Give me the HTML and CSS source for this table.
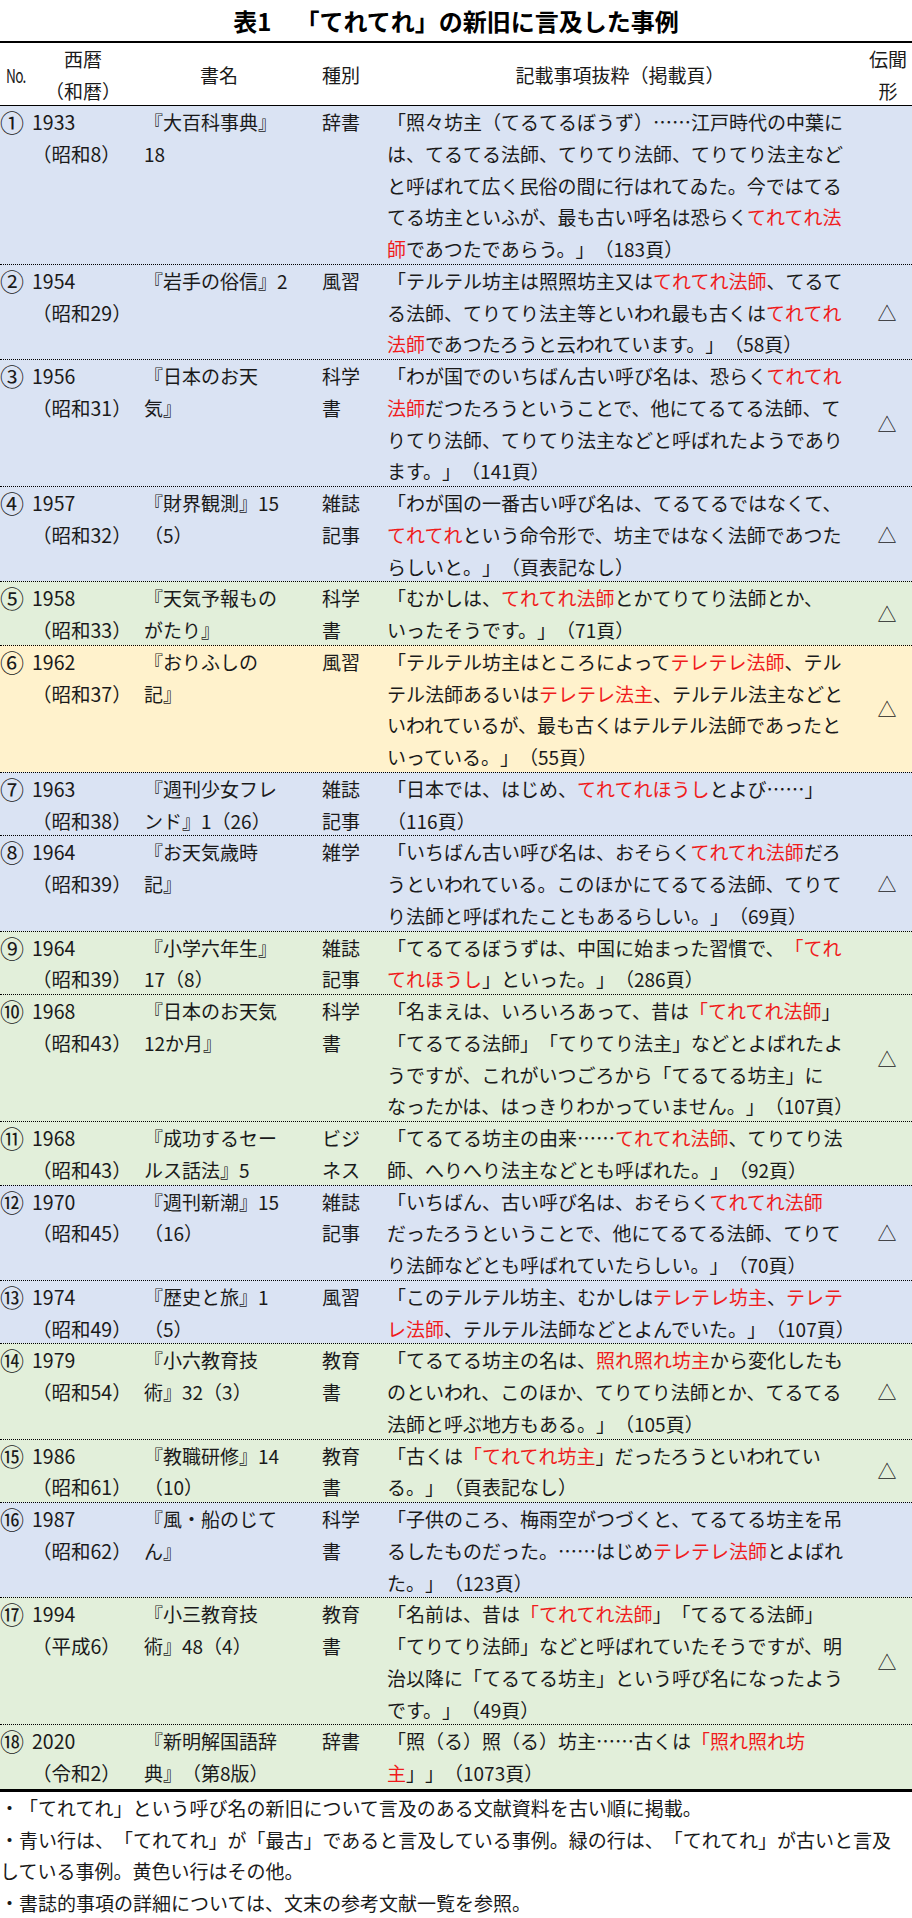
FILE: index.html
```
<!DOCTYPE html>
<html lang="ja">
<head>
<meta charset="utf-8">
<title>表1 「てれてれ」の新旧に言及した事例</title>
<link rel="stylesheet" href="styles.css">
</head>
<body>
<h1 class="title">表1　「てれてれ」の新旧に言及した事例</h1>
<div class="table">
  <div class="row head">
    <div class="c no"><span class="numero">No.</span></div>
    <div class="c yr">西暦<br>（和暦）</div>
    <div class="c bk">書名</div>
    <div class="c kd">種別</div>
    <div class="c tx">記載事項抜粋（掲載頁）</div>
    <div class="c mk">伝聞<br>形</div>
  </div>

  <div class="row blue">
    <div class="c no">①</div>
    <div class="c yr">1933<br>（昭和8）</div>
    <div class="c bk">『大百科事典』<br>18</div>
    <div class="c kd">辞書</div>
    <div class="c tx">「照々坊主（てるてるぼうず）……江戸時代の中葉に<br>は、てるてる法師、てりてり法師、てりてり法主など<br>と呼ばれて広く民俗の間に行はれてゐた。今ではてる<br>てる坊主といふが、最も古い呼名は恐らく<span class="r">てれてれ法</span><br><span class="r">師</span>であつたであらう。」（183頁）</div>
    <div class="c mk"></div>
  </div>

  <div class="row blue">
    <div class="c no">②</div>
    <div class="c yr">1954<br>（昭和29）</div>
    <div class="c bk">『岩手の俗信』2</div>
    <div class="c kd">風習</div>
    <div class="c tx">「テルテル坊主は照照坊主又は<span class="r">てれてれ法師</span>、てるて<br>る法師、てりてり法主等といわれ最も古くは<span class="r">てれてれ</span><br><span class="r">法師</span>であつたろうと云われています。」（58頁）</div>
    <div class="c mk">△</div>
  </div>

  <div class="row blue">
    <div class="c no">③</div>
    <div class="c yr">1956<br>（昭和31）</div>
    <div class="c bk">『日本のお天<br>気』</div>
    <div class="c kd">科学<br>書</div>
    <div class="c tx">「わが国でのいちばん古い呼び名は、恐らく<span class="r">てれてれ</span><br><span class="r">法師</span>だつたろうということで、他にてるてる法師、て<br>りてり法師、てりてり法主などと呼ばれたようであり<br>ます。」（141頁）</div>
    <div class="c mk">△</div>
  </div>

  <div class="row blue">
    <div class="c no">④</div>
    <div class="c yr">1957<br>（昭和32）</div>
    <div class="c bk">『財界観測』15<br>（5）</div>
    <div class="c kd">雑誌<br>記事</div>
    <div class="c tx">「わが国の一番古い呼び名は、てるてるではなくて、<br><span class="r">てれてれ</span>という命令形で、坊主ではなく法師であつた<br>らしいと。」（頁表記なし）</div>
    <div class="c mk">△</div>
  </div>

  <div class="row green">
    <div class="c no">⑤</div>
    <div class="c yr">1958<br>（昭和33）</div>
    <div class="c bk">『天気予報もの<br>がたり』</div>
    <div class="c kd">科学<br>書</div>
    <div class="c tx">「むかしは、<span class="r">てれてれ法師</span>とかてりてり法師とか、<br>いったそうです。」（71頁）</div>
    <div class="c mk">△</div>
  </div>

  <div class="row yellow">
    <div class="c no">⑥</div>
    <div class="c yr">1962<br>（昭和37）</div>
    <div class="c bk">『おりふしの<br>記』</div>
    <div class="c kd">風習</div>
    <div class="c tx">「テルテル坊主はところによって<span class="r">テレテレ法師</span>、テル<br>テル法師あるいは<span class="r">テレテレ法主</span>、テルテル法主などと<br>いわれているが、最も古くはテルテル法師であったと<br>いっている。」（55頁）</div>
    <div class="c mk">△</div>
  </div>

  <div class="row blue">
    <div class="c no">⑦</div>
    <div class="c yr">1963<br>（昭和38）</div>
    <div class="c bk">『週刊少女フレ<br>ンド』1（26）</div>
    <div class="c kd">雑誌<br>記事</div>
    <div class="c tx">「日本では、はじめ、<span class="r">てれてれほうし</span>とよび……」<br>（116頁）</div>
    <div class="c mk"></div>
  </div>

  <div class="row blue">
    <div class="c no">⑧</div>
    <div class="c yr">1964<br>（昭和39）</div>
    <div class="c bk">『お天気歳時<br>記』</div>
    <div class="c kd">雑学</div>
    <div class="c tx">「いちばん古い呼び名は、おそらく<span class="r">てれてれ法師</span>だろ<br>うといわれている。このほかにてるてる法師、てりて<br>り法師と呼ばれたこともあるらしい。」（69頁）</div>
    <div class="c mk">△</div>
  </div>

  <div class="row green">
    <div class="c no">⑨</div>
    <div class="c yr">1964<br>（昭和39）</div>
    <div class="c bk">『小学六年生』<br>17（8）</div>
    <div class="c kd">雑誌<br>記事</div>
    <div class="c tx">「てるてるぼうずは、中国に始まった習慣で、<span class="r">「てれ</span><br><span class="r">てれほうし</span>」といった。」（286頁）</div>
    <div class="c mk"></div>
  </div>

  <div class="row green">
    <div class="c no">⑩</div>
    <div class="c yr">1968<br>（昭和43）</div>
    <div class="c bk">『日本のお天気<br>12か月』</div>
    <div class="c kd">科学<br>書</div>
    <div class="c tx">「名まえは、いろいろあって、昔は<span class="r">「てれてれ法師</span>」<br>「てるてる法師」「てりてり法主」などとよばれたよ<br>うですが、これがいつごろから「てるてる坊主」に<br>なったかは、はっきりわかっていません。」（107頁）</div>
    <div class="c mk">△</div>
  </div>

  <div class="row green">
    <div class="c no">⑪</div>
    <div class="c yr">1968<br>（昭和43）</div>
    <div class="c bk">『成功するセー<br>ルス話法』5</div>
    <div class="c kd">ビジ<br>ネス</div>
    <div class="c tx">「てるてる坊主の由来……<span class="r">てれてれ法師</span>、てりてり法<br>師、へりへり法主などとも呼ばれた。」（92頁）</div>
    <div class="c mk"></div>
  </div>

  <div class="row blue">
    <div class="c no">⑫</div>
    <div class="c yr">1970<br>（昭和45）</div>
    <div class="c bk">『週刊新潮』15<br>（16）</div>
    <div class="c kd">雑誌<br>記事</div>
    <div class="c tx">「いちばん、古い呼び名は、おそらく<span class="r">てれてれ法師</span><br>だったろうということで、他にてるてる法師、てりて<br>り法師などとも呼ばれていたらしい。」（70頁）</div>
    <div class="c mk">△</div>
  </div>

  <div class="row blue">
    <div class="c no">⑬</div>
    <div class="c yr">1974<br>（昭和49）</div>
    <div class="c bk">『歴史と旅』1<br>（5）</div>
    <div class="c kd">風習</div>
    <div class="c tx">「このテルテル坊主、むかしは<span class="r">テレテレ坊主</span>、<span class="r">テレテ</span><br><span class="r">レ法師</span>、テルテル法師などとよんでいた。」（107頁）</div>
    <div class="c mk"></div>
  </div>

  <div class="row green">
    <div class="c no">⑭</div>
    <div class="c yr">1979<br>（昭和54）</div>
    <div class="c bk">『小六教育技<br>術』32（3）</div>
    <div class="c kd">教育<br>書</div>
    <div class="c tx">「てるてる坊主の名は、<span class="r">照れ照れ坊主</span>から変化したも<br>のといわれ、このほか、てりてり法師とか、てるてる<br>法師と呼ぶ地方もある。」（105頁）</div>
    <div class="c mk">△</div>
  </div>

  <div class="row green">
    <div class="c no">⑮</div>
    <div class="c yr">1986<br>（昭和61）</div>
    <div class="c bk">『教職研修』14<br>（10）</div>
    <div class="c kd">教育<br>書</div>
    <div class="c tx">「古くは<span class="r">「てれてれ坊主</span>」だったろうといわれてい<br>る。」（頁表記なし）</div>
    <div class="c mk">△</div>
  </div>

  <div class="row blue">
    <div class="c no">⑯</div>
    <div class="c yr">1987<br>（昭和62）</div>
    <div class="c bk">『風・船のじて<br>ん』</div>
    <div class="c kd">科学<br>書</div>
    <div class="c tx">「子供のころ、梅雨空がつづくと、てるてる坊主を吊<br>るしたものだった。……はじめ<span class="r">テレテレ法師</span>とよばれ<br>た。」（123頁）</div>
    <div class="c mk"></div>
  </div>

  <div class="row green">
    <div class="c no">⑰</div>
    <div class="c yr">1994<br>（平成6）</div>
    <div class="c bk">『小三教育技<br>術』48（4）</div>
    <div class="c kd">教育<br>書</div>
    <div class="c tx">「名前は、昔は<span class="r">「てれてれ法師</span>」「てるてる法師」<br>「てりてり法師」などと呼ばれていたそうですが、明<br>治以降に「てるてる坊主」という呼び名になったよう<br>です。」（49頁）</div>
    <div class="c mk">△</div>
  </div>

  <div class="row green">
    <div class="c no">⑱</div>
    <div class="c yr">2020<br>（令和2）</div>
    <div class="c bk">『新明解国語辞<br>典』（第8版）</div>
    <div class="c kd">辞書</div>
    <div class="c tx">「照（る）照（る）坊主……古くは<span class="r">「照れ照れ坊</span><br><span class="r">主</span>」」（1073頁）</div>
    <div class="c mk"></div>
  </div>
</div>
<div class="notes">
  <p>・「てれてれ」という呼び名の新旧について言及のある文献資料を古い順に掲載。</p>
  <p>・青い行は、「てれてれ」が「最古」であると言及している事例。緑の行は、「てれてれ」が古いと言及<br>している事例。黄色い行はその他。</p>
  <p>・書誌的事項の詳細については、文末の参考文献一覧を参照。</p>
</div>
</body>
</html>
```
FILE: styles.css
```
html, body {
  margin: 0;
  padding: 0;
  background: #ffffff;
}

body {
  width: 912px;
  font-family: "Noto Sans CJK JP", "Noto Sans", sans-serif;
  font-size: 19px;
  color: #1a1a1a;
  text-spacing-trim: space-all;
}

.title {
  margin: 0;
  height: 41px;
  line-height: 41px;
  font-size: 24px;
  font-weight: bold;
  text-align: center;
  color: #000;
}

.table {
  border-top: 2px solid #000;
  border-bottom: 3px solid #000;
}

.row {
  display: grid;
  grid-template-columns: 30px 104px 178px 66px 484px 50px;
  line-height: 31.75px;
  white-space: nowrap;
}

.row + .row {
  border-top: 1px dotted #000;
  margin-top: -1px;
}

.row.head {
  height: 62px;
  align-items: center;
  border-bottom: 1px solid #000;
  line-height: 32px;
}

.row.head + .row {
  border-top: none;
  margin-top: 0;
}

.blue { background: #dae3f3; }
.green { background: #e2efda; }
.yellow { background: #fff2cc; }

.no {
  padding-left: 0;
  font-size: 24px;
  letter-spacing: 0;
}
.yr { padding-left: 2px; font-size: 19.5px; }
.bk { padding-left: 10px; }
.kd { padding-left: 10px; }
.tx { padding-left: 9px; }
.mk {
  align-self: center;
  text-align: center;
}

.head .no {
  padding-left: 6px;
  font-size: 19px;
}
.numero {
  display: inline-block;
  transform: scaleX(0.72);
  transform-origin: left center;
  letter-spacing: -1px;
}
.head .yr { text-align: center; font-size: 19px; }
.head .bk { text-align: center; padding-left: 0; padding-right: 8px; }
.head .tx { text-align: center; padding-left: 0; }
.head .mk { text-align: center; padding-left: 2px; }

.r { color: #f01c1c; }

.notes {
  line-height: 31.75px;
  white-space: nowrap;
}

.notes p {
  margin: 0;
}
```
